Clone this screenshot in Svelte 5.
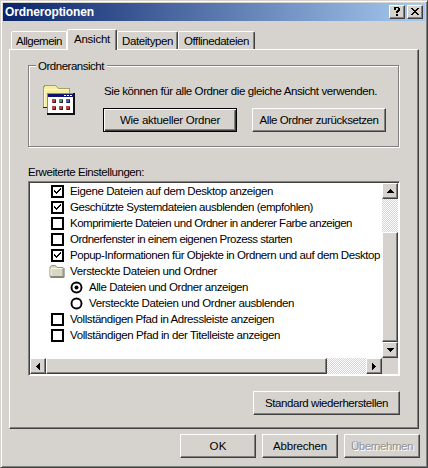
<script lang="ts">
  type Item = {
    kind: 'check' | 'radio' | 'folder';
    label: string;
    width: number;
    checked?: boolean;
  };

  const tabs = [
    { label: 'Allgemein', width: 46 },
    { label: 'Ansicht', width: 36 },
    { label: 'Dateitypen', width: 51 },
    { label: 'Offlinedateien', width: 65 },
  ];
  let active = $state('Ansicht');

  let items: Item[] = $state([
    { kind: 'check', label: 'Eigene Dateien auf dem Desktop anzeigen', width: 203, checked: true },
    { kind: 'check', label: 'Geschützte Systemdateien ausblenden (empfohlen)', width: 243, checked: true },
    { kind: 'check', label: 'Komprimierte Dateien und Ordner in anderer Farbe anzeigen', width: 282 },
    { kind: 'check', label: 'Ordnerfenster in einem eigenen Prozess starten', width: 222 },
    { kind: 'check', label: 'Popup-Informationen für Objekte in Ordnern und auf dem Desktop', width: 310, checked: true },
    { kind: 'folder', label: 'Versteckte Dateien und Ordner', width: 147 },
    { kind: 'radio', label: 'Alle Dateien und Ordner anzeigen', width: 159, checked: true },
    { kind: 'radio', label: 'Versteckte Dateien und Ordner ausblenden', width: 205 },
    { kind: 'check', label: 'Vollständigen Pfad in Adressleiste anzeigen', width: 204 },
    { kind: 'check', label: 'Vollständigen Pfad in der Titelleiste anzeigen', width: 210 },
  ]);

  function toggle(item: Item) {
    if (item.kind === 'check') {
      item.checked = !item.checked;
    } else if (item.kind === 'radio') {
      items.forEach((i) => {
        if (i.kind === 'radio') i.checked = i === item;
      });
    }
  }

  // spreads the tracking so a label keeps its dialog width in any font
  function fit(node: HTMLElement, width: number) {
    const natural = node.getBoundingClientRect().width;
    const count = (node.textContent ?? '').length;
    node.style.letterSpacing = `${(width - natural) / count}px`;
  }
</script>

<div class="window">
  <div class="titlebar">
    <span class="title"><span use:fit={89}>Ordneroptionen</span></span>
    <button class="raised caption" aria-label="Hilfe">
      <svg width="12" height="10" viewBox="0 0 12 10" shape-rendering="crispEdges">
        <path d="M3 0h5v1h1v3h-1v1h-1v1h-2v-2h1v-1h1v-2h-2v2h-2zM5 7h2v2h-2z" />
      </svg>
    </button>
    <button class="raised caption" aria-label="Schließen">
      <svg width="12" height="10" viewBox="0 0 12 10" shape-rendering="crispEdges">
        <path d="M2 1h2v1h1v1h2v-1h1v-1h2v1h-1v1h-1v1h-1v1h1v1h1v1h1v1h-2v-1h-1v-1h-2v1h-1v1h-2v-1h1v-1h1v-1h1v-1h-1v-1h-1v-1h-1z" />
      </svg>
    </button>
  </div>

  <div class="tabs">
    {#each tabs as tab}
      <button class="tab" class:active={active === tab.label} onclick={() => (active = tab.label)}>
        <span use:fit={tab.width}>{tab.label}</span>
      </button>
    {/each}
  </div>

  <div class="panel">
    <div class="group">
      <div class="legend"><span use:fit={66}>Ordneransicht</span></div>
      <svg class="view-icon" width="34" height="34" viewBox="0 0 34 34" shape-rendering="crispEdges">
        <path d="M1 5l2-3h10l3 3h11v19h-26z" fill="#f5eda0" stroke="#a8a060" />
        <path d="M2 6h24M2 6v17" stroke="#fffbd0" fill="none" />
        <path d="M1 24h5" stroke="#222" />
        <rect x="5" y="10" width="28" height="22" fill="#111" />
        <rect x="5" y="10" width="26" height="20" fill="#8a8a8a" />
        <rect x="6" y="14" width="25" height="16" fill="#fff" />
        <rect x="6" y="11" width="26" height="3" fill="#10106e" />
        <path d="M22 12h2v1h-2zM25 12h2v1h-2zM28 12h2v1h-2z" fill="#fff" />
        {#each [16, 23] as y}
          {#each [10, 17, 24] as x}
            <rect {x} {y} width="4" height="4" fill={y === 16 && x === 17 ? '#3c9a88' : x === 24 && y === 16 ? '#5060b0' : '#b04848'} />
            <path d="M{x + 3.5} {y + 1}v2.500h-3" stroke="#222" fill="none" />
          {/each}
        {/each}
      </svg>
      <div class="group-body">
        <div class="hint"><span use:fit={273}>Sie können für alle Ordner die gleiche Ansicht verwenden.</span></div>
        <div class="group-buttons">
          <button class="raised default"><span use:fit={100}>Wie aktueller Ordner</span></button>
          <button class="raised"><span use:fit={119}>Alle Ordner zurücksetzen</span></button>
        </div>
      </div>
    </div>

    <div class="list-label"><span use:fit={116}>Erweiterte Einstellungen:</span></div>

    <div class="list">
      <div class="rows">
        {#each items as item}
          <!-- svelte-ignore a11y_click_events_have_key_events, a11y_no_static_element_interactions -->
          <div class="row {item.kind}" onclick={() => toggle(item)}>
            {#if item.kind === 'check'}
              <svg width="13" height="13" viewBox="0 0 13 13" shape-rendering="crispEdges">
                <rect x="1" y="1" width="11" height="11" fill="#fff" stroke="#000" stroke-width="2" />
                {#if item.checked}
                  <path d="M3 5h1v1h1v1h1v-1h1v-1h1v-1h1v-1h1v2h-1v1h-1v1h-1v1h-1v1h-1v-1h-1v-1h-1z" />
                {/if}
              </svg>
            {:else if item.kind === 'radio'}
              <svg width="13" height="13" viewBox="0 0 13 13">
                <circle cx="6.5" cy="6.5" r="5" fill="#fff" stroke="#000" stroke-width="1.9" />
                {#if item.checked}
                  <circle cx="6.5" cy="6.5" r="2" />
                {/if}
              </svg>
            {:else}
              <svg width="16" height="14" viewBox="0 0 16 14">
                <path d="M1 12.5v-9l1.500-2h4l1.500 2h6v9z" fill="#d9d6c6" stroke="#96937e" />
                <path d="M2 11.500v-7h11.500" fill="none" stroke="#fbf9dc" />
                <path d="M1.500 13.300h13.500v-9" fill="none" stroke="#66645c" />
              </svg>
            {/if}
            <span use:fit={item.width}>{item.label}</span>
          </div>
        {/each}
      </div>

      <div class="scroll vertical">
        <div class="raised arrow"><svg width="7" height="4" viewBox="0 0 7 4" shape-rendering="crispEdges"><path d="M3 0h1v1h1v1h1v1h1v1h-7v-1h1v-1h1v-1h1z" /></svg></div>
        <div class="track"></div>
        <div class="raised thumb"></div>
        <div class="raised arrow"><svg width="7" height="4" viewBox="0 0 7 4" shape-rendering="crispEdges"><path d="M0 0h7v1h-1v1h-1v1h-1v1h-1v-1h-1v-1h-1v-1h-1z" /></svg></div>
      </div>
      <div class="scroll horizontal">
        <div class="raised arrow"><svg width="4" height="7" viewBox="0 0 4 7" shape-rendering="crispEdges"><path d="M4 0v7h-1v-1h-1v-1h-1v-1h-1v-1h1v-1h1v-1h1v-1z" /></svg></div>
        <div class="raised thumb"></div>
        <div class="track"></div>
        <div class="raised arrow"><svg width="4" height="7" viewBox="0 0 4 7" shape-rendering="crispEdges"><path d="M0 0v7h1v-1h1v-1h1v-1h1v-1h-1v-1h-1v-1h-1v-1z" /></svg></div>
      </div>
      <div class="corner"></div>
    </div>

    <button class="raised restore"><span use:fit={123}>Standard wiederherstellen</span></button>
  </div>

  <div class="actions">
    <button class="raised"><span use:fit={17}>OK</span></button>
    <button class="raised"><span use:fit={54}>Abbrechen</span></button>
    <button class="raised" disabled><span use:fit={62}>Übernehmen</span></button>
  </div>
</div>

<style>
  :global(body) {
    margin: 0;
    background: #d6d3ce;
  }

  .window {
    box-sizing: border-box;
    width: 428px;
    height: 468px;
    padding: 2px 1px 0 2px;
    background: #d6d3ce;
    border: 1px solid #d6d3ce;
    border-right-color: #404040;
    border-bottom-color: #404040;
    box-shadow: inset 1px 1px #fff, inset -1px -1px #808080;
    font-family: 'Liberation Sans', Arial, sans-serif;
    font-size: 11.5px;
    line-height: 14px;
    color: #000;
    overflow: hidden;
  }

  button {
    padding: 0;
    font: inherit;
    color: inherit;
  }

  span {
    display: inline-block;
    white-space: nowrap;
  }

  .raised {
    box-sizing: border-box;
    display: flex;
    align-items: center;
    justify-content: center;
    background: #d6d3ce;
    border: 1px solid #fff;
    border-right-color: #404040;
    border-bottom-color: #404040;
    border-radius: 0;
    box-shadow: inset -1px -1px #808080;
  }

  /* Title bar */
  .titlebar {
    box-sizing: border-box;
    display: flex;
    align-items: center;
    height: 18px;
    width: 422px;
    padding: 0 2px;
    background: linear-gradient(to right, #0a246a, #a6caf0);
  }

  .title {
    flex: 1;
    color: #fff;
    font-size: 12px;
    font-weight: bold;
  }

  .caption {
    width: 16px;
    height: 14px;
  }

  .caption + .caption {
    margin-left: 2px;
  }

  /* Tabs */
  .tabs {
    display: flex;
    align-items: flex-end;
    height: 28px;
    padding-left: 8px;
  }

  .tab {
    box-sizing: border-box;
    height: 18px;
    width: 56px;
    background: #d6d3ce;
    border: 1px solid #fff;
    border-bottom: 0;
    border-right: 1px solid #404040;
    border-radius: 2px 2px 0 0;
    box-shadow: inset -1px 0 #808080;
  }

  .tab:first-child {
    border-right-color: #fff;
    box-shadow: none;
  }

  .tab:nth-child(3) {
    width: 61px;
  }

  .tab:nth-child(4) {
    width: 77px;
  }

  .tab.active {
    position: relative;
    z-index: 1;
    width: 50px;
    height: 21px;
    margin-bottom: -1px;
    padding-bottom: 2px;
  }

  .panel {
    box-sizing: border-box;
    width: 410px;
    height: 380px;
    margin-left: 6px;
    padding: 15px 18px 0;
    border: 1px solid #fff;
    border-right-color: #404040;
    border-bottom-color: #404040;
    box-shadow: inset -1px -1px #808080;
  }

  .group {
    box-sizing: border-box;
    display: flex;
    width: 371px;
    height: 82px;
    border: 1px solid #808080;
    box-shadow: 1px 1px #fff, inset 1px 1px #fff;
  }

  .legend {
    width: 69px;
    height: 14px;
    margin: -7px -78px 0 7px;
    padding-left: 2px;
    background: #d6d3ce;
  }

  .view-icon {
    margin: 17px 0 0 13px;
  }

  .group-body {
    margin: 18px 0 0 27px;
  }

  .hint {
    padding-left: 1px;
  }

  .group-buttons {
    display: flex;
    gap: 15px;
    margin-top: 10px;
  }

  .group-buttons .raised {
    width: 134px;
    height: 24px;
  }

  .raised.default {
    border-color: #000;
    box-shadow: inset 1px 1px #fff, inset -1px -1px #404040, inset -2px -2px #808080;
  }

  .list-label {
    margin: 18px 0 2px;
  }

  /* Settings list */
  .list {
    box-sizing: border-box;
    display: grid;
    grid-template: 175px 16px / 352px 16px;
    width: 372px;
    height: 195px;
    border: 1px solid #808080;
    border-right-color: #fff;
    border-bottom-color: #fff;
    box-shadow: inset 1px 1px #404040;
    padding: 1px;
    background: #fff;
  }

  .rows {
    overflow: hidden;
  }

  .row {
    display: flex;
    align-items: center;
    height: 16px;
    padding-left: 21px;
    gap: 6px;
  }

  .row.folder {
    padding-left: 19px;
    gap: 5px;
  }

  .row.radio {
    padding-left: 40px;
  }

  svg {
    flex: none;
    display: block;
  }

  .scroll {
    display: flex;
    min-width: 0;
  }

  .vertical {
    flex-direction: column;
  }

  .arrow {
    flex: none;
    width: 16px;
    height: 16px;
  }

  .track {
    flex: 1;
    background: repeating-conic-gradient(#fff 0 25%, #d6d3ce 0 50%) 0 0 / 2px 2px;
  }

  .vertical .thumb {
    height: 110px;
  }

  .horizontal .thumb {
    width: 281px;
  }

  .corner {
    background: #d6d3ce;
  }

  .restore {
    width: 147px;
    height: 24px;
    margin: 15px 0 0 225px;
  }

  /* Bottom buttons */
  .actions {
    display: flex;
    justify-content: flex-end;
    gap: 6px;
    padding: 5px 6px 0 0;
  }

  .actions .raised {
    width: 76px;
    height: 24px;
  }

  .raised:disabled {
    color: #909090;
    text-shadow: 1px 1px #fff;
  }
</style>
